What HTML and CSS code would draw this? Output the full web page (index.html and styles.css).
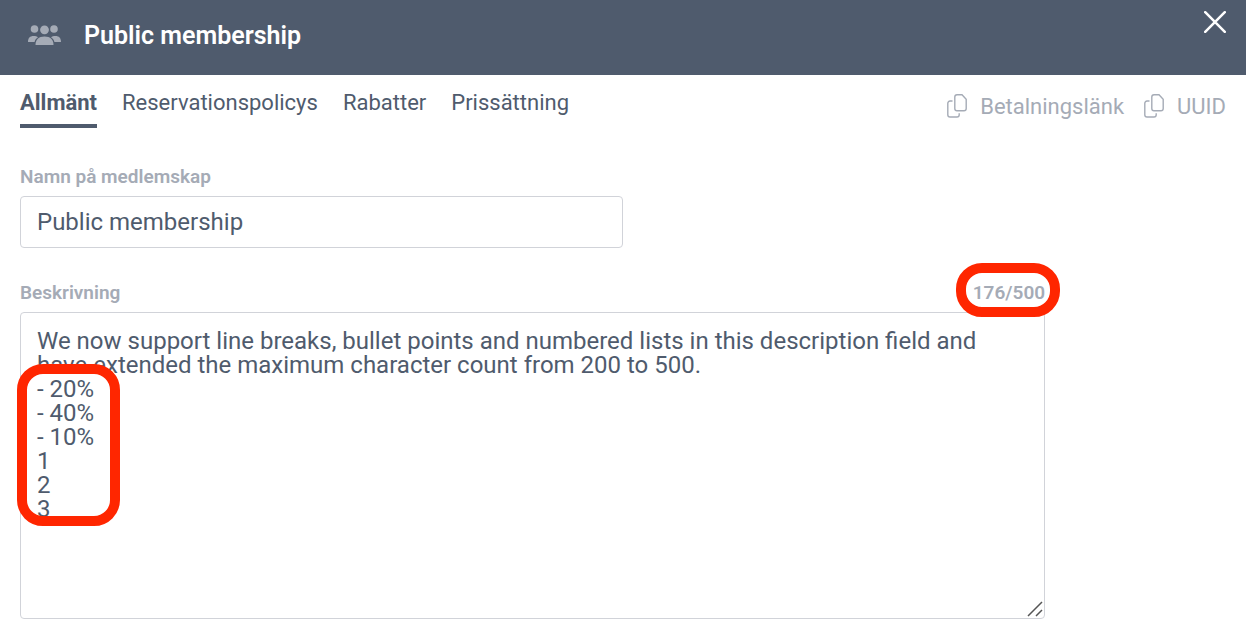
FILE: index.html
```html
<!DOCTYPE html>
<html lang="sv">
<head>
<meta charset="utf-8">
<meta name="viewport" content="width=device-width, initial-scale=1">
<title>Public membership</title>
<link rel="stylesheet" href="styles.css">
</head>
<body>
<header class="header">
  <svg class="header-icon" viewBox="0 0 33 20" aria-hidden="true">
    <circle cx="6.500" cy="4" r="3.800"/>
    <circle cx="26" cy="4" r="3.800"/>
    <circle cx="16.500" cy="4.800" r="4.400"/>
    <path d="M0 17c0-4 2-6 5.500-6 2 0 3.500.4 4.500 1.200C8.200 13.300 7 15 6.600 17z"/>
    <path d="M33 17c0-4-2-6-5.500-6-2 0-3.500.4-4.500 1.200 1.800 1.100 3 2.800 3.400 4.800z"/>
    <path d="M7.500 20c0-5.200 3-8.400 9-8.400s9 3.200 9 8.400z"/>
  </svg>
  <h1 class="title">Public membership</h1>
  <button class="close" type="button" aria-label="Stäng">
    <svg class="close-icon" viewBox="0 0 22 22" aria-hidden="true"><path d="M1.200 1.200l19.600 19.600M20.800 1.200L1.200 20.800"/></svg>
  </button>
</header>
<main class="content">
  <div class="toolbar">
    <nav class="tabs">
      <a class="tab tab-active" href="#allmant">Allmänt</a>
      <a class="tab" href="#policys">Reservationspolicys</a>
      <a class="tab" href="#rabatter">Rabatter</a>
      <a class="tab" href="#pris">Prissättning</a>
    </nav>
    <div class="actions">
      <button class="copy" type="button">
        <svg class="copy-icon" viewBox="0 0 20 24" aria-hidden="true"><path d="M10 .8h5l4.200 4.400v9.300a2.200 2.200 0 0 1-2.200 2.200h-7a2.200 2.200 0 0 1-2.200-2.200V3A2.200 2.200 0 0 1 10 .8zM5.500 7H3A2.200 2.200 0 0 0 .8 9.200v11.600A2.200 2.200 0 0 0 3 23h7a2.200 2.200 0 0 0 2.200-2.200v-1.500"/></svg>
        <span>Betalningslänk</span>
      </button>
      <button class="copy" type="button">
        <svg class="copy-icon" viewBox="0 0 20 24" aria-hidden="true"><path d="M10 .8h5l4.200 4.400v9.300a2.200 2.200 0 0 1-2.200 2.200h-7a2.200 2.200 0 0 1-2.200-2.200V3A2.200 2.200 0 0 1 10 .8zM5.500 7H3A2.200 2.200 0 0 0 .8 9.200v11.600A2.200 2.200 0 0 0 3 23h7a2.200 2.200 0 0 0 2.200-2.200v-1.500"/></svg>
        <span>UUID</span>
      </button>
    </div>
  </div>
  <form class="form">
    <div class="field field-name">
      <label class="label" for="name">Namn på medlemskap</label>
      <input class="control" id="name" type="text" value="Public membership">
    </div>
    <div class="field field-description">
      <div class="label-row">
        <label class="label" for="description">Beskrivning</label>
        <span class="counter">176/500<span class="mark mark-counter"></span></span>
      </div>
      <div class="area">
        <textarea class="control control-area" id="description">We now support line breaks, bullet points and numbered lists in this description field and have extended the maximum character count from 200 to 500.
- 20%
- 40%
- 10%
1
2
3</textarea>
        <svg class="grip" viewBox="0 0 16 16" aria-hidden="true"><path d="M1 15L15 1M9 15l6-6"/></svg>
        <span class="mark mark-list"></span>
      </div>
    </div>
  </form>
</main>
</body>
</html>
```
FILE: styles.css
```css
* {
  box-sizing: border-box;
}

body {
  margin: 0;
  background: #fff;
  color: #4f5b6d;
  font-family: Roboto, "Liberation Sans", sans-serif;
  font-size: 24px;
}

button,
input,
textarea {
  color: inherit;
  font: inherit;
}

button {
  padding: 0;
  border: 0;
  background: none;
}

svg {
  display: block;
  flex: none;
}

.header {
  display: flex;
  align-items: flex-start;
  padding: 11px 20px 14px 28px;
  background: #4f5b6d;
  color: #fff;
}

.header-icon {
  width: 33px;
  height: 20px;
  margin: 14px 23px 0 0;
  fill: #a5abb6;
}

.title {
  flex: 1;
  margin: 0;
  font-size: 25px;
  font-weight: 600;
  line-height: 50px;
}

.close-icon {
  width: 22px;
  height: 22px;
  fill: none;
  stroke: #fff;
  stroke-width: 2.500;
  stroke-linecap: round;
}

.content {
  padding: 12px 20px 7px;
}

.toolbar {
  display: flex;
  justify-content: space-between;
  align-items: flex-start;
}

.tabs {
  display: flex;
  gap: 25px;
}

.tab {
  padding-bottom: 5px;
  border-bottom: 4px solid transparent;
  color: inherit;
  font-size: 22px;
  line-height: 32px;
  text-decoration: none;
}

.tab-active {
  border-color: #4f5b6d;
  font-weight: 700;
}

.actions {
  display: flex;
  gap: 20px;
  padding-top: 4px;
}

.copy {
  display: flex;
  align-items: center;
  gap: 13px;
  color: #a5abb6;
  font-size: 22px;
  line-height: 32px;
}

.copy-icon {
  width: 20px;
  height: 24px;
  margin-bottom: 2px;
  fill: none;
  stroke: #a5abb6;
  stroke-width: 1.400;
}

.form {
  display: flex;
  flex-direction: column;
  gap: 32px;
  padding-top: 36px;
}

.field-name {
  width: 50%;
}

.field-description {
  width: 85%;
}

.label,
.counter {
  display: block;
  color: #a5abb6;
  font-size: 19px;
  font-weight: 600;
  line-height: 26px;
}

.label-row {
  display: flex;
  justify-content: space-between;
}

.control {
  display: block;
  width: 100%;
  height: 52px;
  margin-top: 6px;
  padding: 0 16px;
  border: 1px solid #d1d3d9;
  border-radius: 4px;
  outline: 0;
  background: #fff;
}

.control-area {
  height: 307px;
  padding: 16px;
  line-height: 24px;
  resize: none;
}

.area,
.counter {
  position: relative;
}

.grip {
  position: absolute;
  right: 2px;
  bottom: 2px;
  width: 16px;
  height: 16px;
  stroke: #555;
  stroke-width: 1.500;
}

.mark {
  position: absolute;
  z-index: 1;
  border: 10px solid #ff2600;
  pointer-events: none;
}

.mark-counter {
  inset: -17px -15px -11px -17px;
  border-radius: 26px;
}

.mark-list {
  top: 52px;
  left: -3px;
  width: 103px;
  height: 162px;
  border-radius: 26px;
}
```
